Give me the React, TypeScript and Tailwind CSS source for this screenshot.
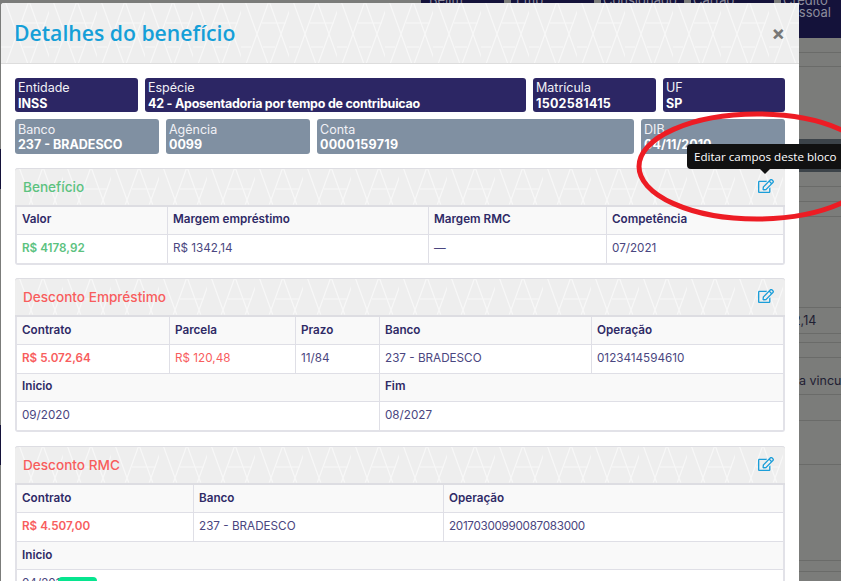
import { FaRegEdit } from 'react-icons/fa'

type Cell = { label: string; value: string; valueClass?: string }

const sans = "font-['Inter','Liberation_Sans',sans-serif]"

// Hex line pattern used on the modal and block headers
function HexPattern({ id }: { id: string }) {
  return (
    <svg className="absolute inset-0 w-full h-full" aria-hidden="true">
      <defs>
        <pattern id={id} width="48" height="62" patternUnits="userSpaceOnUse">
          <path
            d="M4 -2 L16 31 L4 64 M28 -2 L16 31 L28 64 M28 -2 L40 31 L28 64 M52 -2 L40 31 L52 64 M21 20 L45 20 M22 44 L34 44 M-3 44 L10 44"
            fill="none"
            stroke="#ffffff"
            strokeWidth="1.2"
            opacity="0.55"
          />
        </pattern>
      </defs>
      <rect width="100%" height="100%" fill={`url(#${id})`} />
    </svg>
  )
}

function InfoCard({ label, value, gray, valueClass }: { label: string; value: string; gray?: boolean; valueClass?: string }) {
  return (
    <div className={`rounded-[3px] px-[3px] text-[12.5px] leading-[16px] text-[#f1f1f6] ${gray ? 'bg-[#8090a2] h-[35px] pt-[2px]' : 'bg-[#2c2664] h-[34px] pt-[1px]'}`}>
      <div className="whitespace-nowrap translate-y-[1px]">{label}</div>
      <div className={`font-bold whitespace-nowrap text-white ${gray ? '' : 'translate-y-[1px]'} ${valueClass ?? ''}`}>{value}</div>
    </div>
  )
}

function Row({ cols, cells }: { cols: string; cells: Cell[] }) {
  return (
    <>
      <div className={`grid ${cols} h-[28.4px] bg-[#f9f9f9] border-b border-[#dfdfe6]`}>
        {cells.map((c, i) => (
          <div key={i} className={`px-[5px] flex items-center text-[11.7px] font-semibold text-[#2f2a66] whitespace-nowrap ${i > 0 ? 'border-l border-[#dfdfe6]' : ''}`}>
            {c.label}
          </div>
        ))}
      </div>
      <div className={`grid ${cols} h-[28.4px] bg-white border-b border-[#dfdfe6] last:border-b-0`}>
        {cells.map((c, i) => (
          <div key={i} className={`px-[5px] flex items-center text-[11.7px] whitespace-nowrap ${c.valueClass ?? 'text-[#4a4680]'} ${i > 0 ? 'border-l border-[#dfdfe6]' : ''}`}>
            {c.value}
          </div>
        ))}
      </div>
    </>
  )
}

function Block({ id, title, titleClass, className, children }: { id: string; title: string; titleClass: string; className: string; children: React.ReactNode }) {
  return (
    <div className={`rounded-[3px] border-x-2 border-b-2 border-[#e2e2e8] bg-white ${className}`}>
      <div className="relative -mx-[2px] h-[38.5px] rounded-t-[3px] bg-[#eeeeee] border-t border-b-2 border-[#dddde2] overflow-hidden flex items-center justify-between pl-[8px] pr-[11px]">
        <HexPattern id={id} />
        <span className={`relative -translate-y-[0.5px] text-[13.6px] font-medium ${titleClass}`}>{title}</span>
        <FaRegEdit className="relative -translate-y-[1px] text-[#1b9ed9]" size={16} />
      </div>
      {children}
    </div>
  )
}

function NavTab({ children, className }: { children: React.ReactNode; className: string }) {
  return (
    <div className={`bg-[#14123a] overflow-hidden text-[#8c8c9c] text-[13px] leading-[12px] ${className}`}>
      <div className="-mt-[6px]">{children}</div>
    </div>
  )
}

export default function App() {
  const red = 'text-[#f85d5d]'
  const redBold = 'text-[#f85d5d] font-semibold'

  return (
    <div className={`relative h-[581px] w-[841px] overflow-hidden bg-[#7b7c7a] ${sans}`}>
      {/* Page behind the modal */}
      <div className="flex h-full">
        <div className="w-[1px] flex flex-col shrink-0">
          <div className="h-[149px]" />
          <div className="h-[40px] bg-[#14123a]" />
          <div className="h-[236px]" />
          <div className="h-[40px] bg-[#14123a]" />
        </div>
        <div className="flex-1 min-w-0 overflow-hidden text-[12.5px] text-[#1f2033]">
          <div className="h-[38px] flex justify-end gap-[7px]">
            <NavTab className="w-[83px] pl-[8px]">Belim</NavTab>
            <NavTab className="w-[83px] pl-[5px]">Emp</NavTab>
            <NavTab className="w-[83px] pl-[2px]">Consignado</NavTab>
            <NavTab className="w-[83px] pl-[2px]">Cartão</NavTab>
            <NavTab className="w-[60px] pl-[2px]">Crédito<br />Pessoal</NavTab>
          </div>
          <div className="h-[15px] border-b border-[#6a6b69]" />
          <div className="h-[14px] border-b border-[#6a6b69]" />
          <div className="h-[72px]" />
          <div className="h-[33px] bg-[#3c4349]" />
          <div className="h-[15px] border-b border-[#6a6b69]" />
          <div className="h-[15px] border-b border-[#6a6b69]" />
          <div className="h-[15px] border-b border-[#6a6b69]" />
          <div className="h-[91px] border-b border-[#6a6b69]" />
          <div className="h-[26px] border-b border-[#6a6b69] flex items-center pl-[792px] pt-[2px]">2,14</div>
          <div className="h-[9px] border-b border-[#6a6b69]" />
          <div className="h-[15px] border-b border-[#6a6b69]" />
          <div className="h-[37px] border-b border-[#6a6b69] whitespace-nowrap pl-[798px] pt-[14px]">a vinculo</div>
          <div className="h-[26px] border-b border-[#6a6b69]" />
          <div className="h-[44px] border-b border-[#6a6b69]" />
          <div className="h-[96px] border-b border-[#6a6b69]" />
          <div className="h-[11px] border-b border-[#6a6b69]" />
        </div>
      </div>

      {/* Modal */}
      <div className="absolute left-[1px] top-[3px] w-[798px] h-[578px] bg-white overflow-hidden rounded-tl-[3px]">
        <div className="relative h-[61px] bg-[#eeeeee] border-b border-[#dddddd] flex items-center justify-between pl-[13px] pr-[14px] overflow-hidden">
          <HexPattern id="modal-hex" />
          <h1 className="relative text-[21.2px] font-semibold text-[#159fd8] font-['Open_Sans',sans-serif]">Detalhes do benefício</h1>
          <span className="relative text-[20px] leading-none font-bold text-[#777777]">×</span>
        </div>

        <div className="pl-[14px] pr-[14px] pt-[14px]">
          <div className="grid grid-cols-[123px_1fr_123px_122px] gap-[7px]">
            <InfoCard label="Entidade" value="INSS" />
            <InfoCard label="Espécie" value="42 - Aposentadoria por tempo de contribuicao" valueClass="tracking-[-0.24px]" />
            <InfoCard label="Matrícula" value="1502581415" valueClass="tracking-[0.25px]" />
            <InfoCard label="UF" value="SP" />
          </div>
          <div className="mt-[7px] mb-[14px] grid grid-cols-[144px_144px_1fr_144px] gap-[7px]">
            <InfoCard gray label="Banco" value="237 - BRADESCO" />
            <InfoCard gray label="Agência" value="0099" />
            <InfoCard gray label="Conta" value="0000159719" valueClass="tracking-[0.25px]" />
            <InfoCard gray label="DIB" value="04/11/2010" />
          </div>

          <Block id="hex-beneficio" title="Benefício" titleClass="text-[#5cc27f]" className="mb-[13px]">
            <Row
              cols="grid-cols-[150px_261px_178px_1fr]"
              cells={[
                { label: 'Valor', value: 'R$ 4178,92', valueClass: 'text-[#5cc27f] font-semibold' },
                { label: 'Margem empréstimo', value: 'R$ 1342,14' },
                { label: 'Margem RMC', value: '—' },
                { label: 'Competência', value: '07/2021' },
              ]}
            />
          </Block>

          <Block id="hex-emprestimo" title="Desconto Empréstimo" titleClass={red} className="mb-[14px]">
            <Row
              cols="grid-cols-[152px_126px_84px_212px_1fr]"
              cells={[
                { label: 'Contrato', value: 'R$ 5.072,64', valueClass: redBold },
                { label: 'Parcela', value: 'R$ 120,48', valueClass: red },
                { label: 'Prazo', value: '11/84' },
                { label: 'Banco', value: '237 - BRADESCO' },
                { label: 'Operação', value: '0123414594610' },
              ]}
            />
            <Row
              cols="grid-cols-[362px_1fr]"
              cells={[
                { label: 'Inicio', value: '09/2020' },
                { label: 'Fim', value: '08/2027' },
              ]}
            />
          </Block>

          <Block id="hex-rmc" title="Desconto RMC" titleClass={red} className="mb-[14px]">
            <Row
              cols="grid-cols-[176px_250px_1fr]"
              cells={[
                { label: 'Contrato', value: 'R$ 4.507,00', valueClass: redBold },
                { label: 'Banco', value: '237 - BRADESCO' },
                { label: 'Operação', value: '20170300990087083000', valueClass: 'text-[#4a4680] tracking-[-0.3px]' },
              ]}
            />
            <Row
              cols="grid-cols-[1fr]"
              cells={[{ label: 'Inicio', value: '04/2017' }]}
            />
          </Block>
        </div>
      </div>

      {/* Green pill peeking over the last row */}
      <div className="absolute left-[58px] top-[577px] h-[8px] w-[39px] rounded-[4px] bg-[#06e58f]" />

      {/* Red marker ring drawn on the screenshot */}
      <svg className="absolute inset-0 pointer-events-none" width="841" height="581" aria-hidden="true">
        <ellipse cx="757" cy="166.5" rx="118" ry="52.5" fill="none" stroke="#ed1c24" strokeWidth="5" />
      </svg>

      {/* Tooltip */}
      <div className="absolute left-[687px] top-[144px] w-[154px] h-[25px] rounded-l-[4px] bg-[#111111] text-white text-[11.6px] flex items-center pl-[7px] pt-[1px] whitespace-nowrap font-['Open_Sans',sans-serif]">
        Editar campos deste bloco
        <div className="absolute left-[73px] top-[25px] w-0 h-0 border-x-[5px] border-x-transparent border-t-[5px] border-t-[#111111]" />
      </div>
    </div>
  )
}
